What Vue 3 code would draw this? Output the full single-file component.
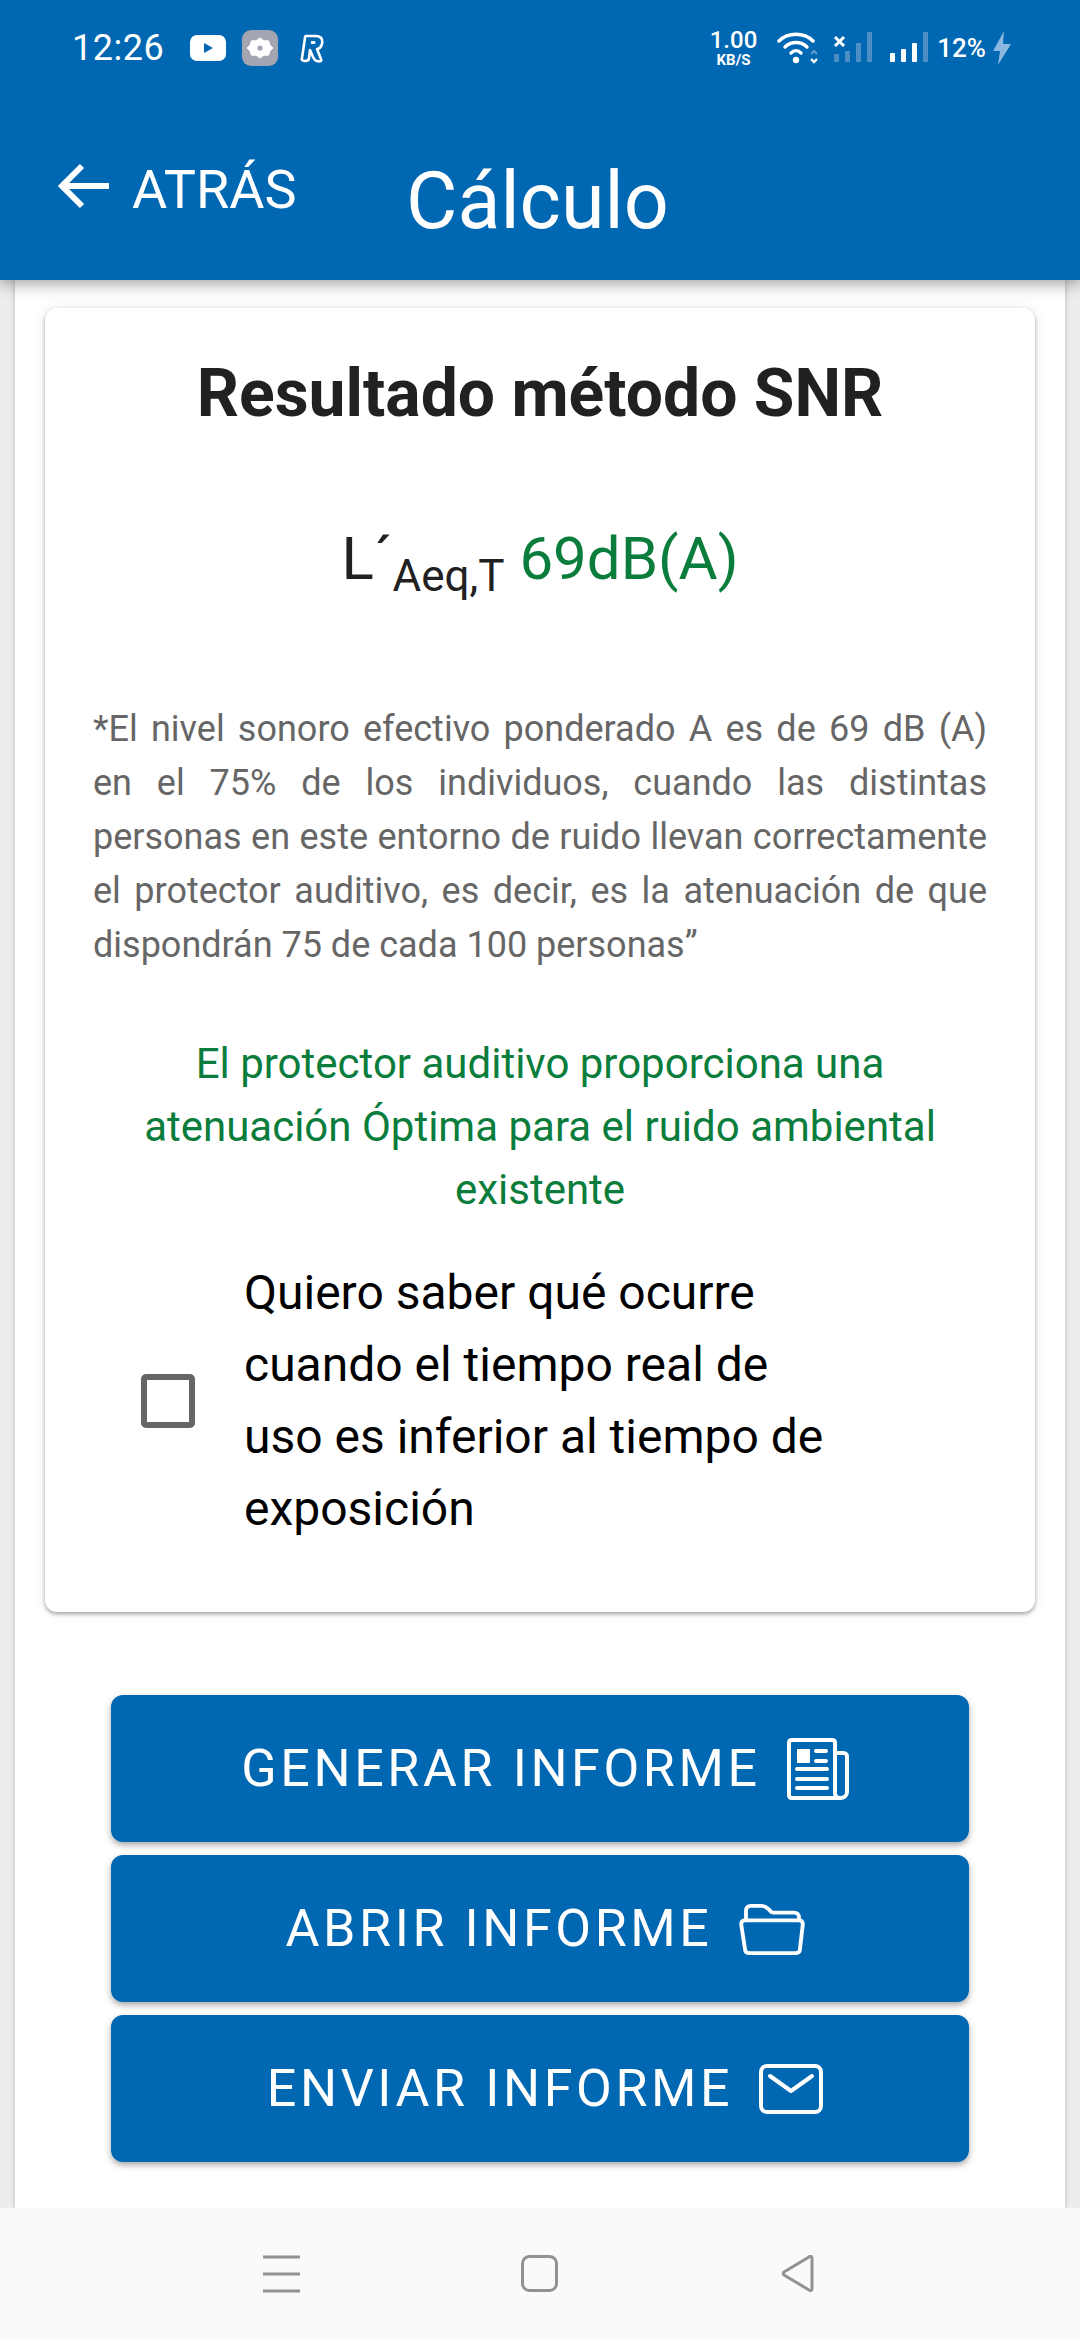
<template>
  <div class="screen">
    <header class="appbar">
      <div class="status">
        <div class="status-left">
          <span class="time">12:26</span>
          <svg class="yt" viewBox="0 0 36 26"><rect width="36" height="26" rx="7" fill="#fff"/><path d="M14 8l9 5-9 5z" fill="#0067b2"/></svg>
          <svg class="gear" viewBox="0 0 36 36"><rect width="36" height="36" rx="9" fill="#a3a5b3"/><path d="M18 8l4 2.800h4.500l1.500 4.400 3 2.800-3 2.800-1.500 4.400H22L18 28l-4-2.800H9.500L8 20.800 5 18l3-2.800 1.500-4.400H14z" fill="#fff" stroke="#fff" stroke-width="1" stroke-linejoin="round"/><circle cx="18" cy="18" r="2.600" fill="#a3a5b3"/></svg>
          <svg class="rev" viewBox="0 0 24 30"><path d="M6 3h10c5 0 7 3 6 8-1 3-3 5-5 5l4 10c1 2-1 3-4 2-2 0-3-2-4-4l-3-7-1 8c0 2-2 3-4 3s-4-1-3-3L5 5c0-1 0-2 1-2z" fill="none" stroke="#fff" stroke-width="2.600" stroke-linejoin="round"/><path d="M11 8h3c2 0 2 3 0 3h-3z" fill="#fff"/></svg>
        </div>
        <div class="status-right">
          <div class="speed"><span>1.00</span><span class="unit">KB/S</span></div>
          <svg class="wifi" viewBox="0 0 42 34"><g fill="none" stroke="#fff" stroke-width="3.400" stroke-linecap="round"><path d="M2 10C11 1 27 1 36 10"/><path d="M8 16c6-6 16-6 22 0"/><path d="M14 22c3-3 7-3 10 0"/></g><circle cx="19" cy="29" r="3.200" fill="#fff"/><path d="M34 23l3-3 3 3" fill="none" stroke="#5f9bcc" stroke-width="2"/><path d="M34 28l3 3 3-3" fill="none" stroke="#fff" stroke-width="2.400"/></svg>
          <svg class="sig" viewBox="0 0 40 32"><path d="M2 5l9 9M11 5l-9 9" stroke="#fff" stroke-width="3"/><g fill="#4b8fc6"><rect x="1" y="22" width="5" height="8"/><rect x="12" y="19" width="5" height="11"/><rect x="23" y="11" width="5" height="19"/><rect x="34" y="0" width="5" height="30"/></g></svg>
          <svg class="sig2" viewBox="0 0 40 32"><g fill="#fff"><rect x="1" y="21" width="5" height="9" rx="1"/><rect x="12" y="17" width="5" height="13" rx="1"/><rect x="23" y="11" width="5" height="19" rx="1"/></g><rect x="34" y="0" width="5" height="30" fill="#4b8fc6"/></svg>
          <span class="batt">12%</span>
          <svg class="bolt" viewBox="0 0 20 34"><path d="M12 0L1 20h7L6 34l13-21h-8z" fill="#8ab8df"/></svg>
        </div>
      </div>
      <div class="toolbar">
        <div class="back">
          <svg viewBox="0 0 56 48"><path d="M53 24H6M26 4L6 24l20 20" fill="none" stroke="#fff" stroke-width="6"/></svg>
          <span>ATRÁS</span>
        </div>
        <h1>Cálculo</h1>
      </div>
    </header>

    <main class="content">
      <div class="sheet">
        <section class="card">
          <h2>Resultado método SNR</h2>
          <p class="level">L´<span class="sub">Aeq,T</span> <span class="green">69dB(A)</span></p>
          <p class="note">*El nivel sonoro efectivo ponderado A es de 69 dB (A) en el 75% de los individuos, cuando las distintas personas en este entorno de ruido llevan correctamente el protector auditivo, es decir, es la atenuación de que dispondrán 75 de cada 100 personas”</p>
          <p class="verdict">El protector auditivo proporciona una atenuación Óptima para el ruido ambiental existente</p>
          <label class="check">
            <span class="box"></span>
            <span class="check-text">Quiero saber qué ocurre cuando el tiempo real de uso es inferior al tiempo de exposición</span>
          </label>
        </section>

        <div class="actions">
          <button v-for="b in buttons" :key="b.label" class="btn">
            <span>{{ b.label }}</span>
            <svg v-if="b.icon === 'news'" class="ico-news" viewBox="0 0 62 62"><g fill="none" stroke="#fff" stroke-width="4" stroke-linejoin="round"><path d="M5 2h40c2 0 3 1 3 3v50c0 3 2 5 5 5H5c-2 0-3-1-3-3V5c0-2 1-3 3-3z"/><path d="M48 15h8c2 0 4 1 4 3v36c0 4-3 6-7 6"/></g><rect x="10" y="11" width="13" height="14" fill="#fff"/><g stroke="#fff" stroke-width="4" stroke-linecap="round"><path d="M29 13h10M29 23h10M10 31h30M10 41h30M10 50h30"/></g></svg>
            <svg v-else-if="b.icon === 'folder'" class="ico-folder" viewBox="0 0 68 54"><g fill="none" stroke="#fff" stroke-width="4" stroke-linejoin="round"><path d="M7 18V8c0-3 2-5 5-5h11c3 0 5 1 7 3l2 2c1 2 2 2 4 2h21c3 0 5 2 5 5v4"/><path d="M6 18h56c3 0 4 2 4 4l-3 26c0 3-2 4-5 4H11c-3 0-5-1-5-4L2 22c0-2 1-4 4-4z"/></g></svg>
            <svg v-else class="ico-mail" viewBox="0 0 64 50"><rect x="2" y="2" width="60" height="46" rx="6" fill="none" stroke="#fff" stroke-width="4"/><path d="M11 12l21 15 21-15" fill="none" stroke="#fff" stroke-width="4" stroke-linecap="round" stroke-linejoin="round"/></svg>
          </button>
        </div>
      </div>
    </main>

    <nav class="navbar">
      <svg viewBox="0 0 38 38"><path d="M0 2h37M0 19h37M0 36h37" stroke="#929292" stroke-width="3"/></svg>
      <svg viewBox="0 0 38 38"><rect x="1.500" y="1.500" width="34" height="34" rx="7" fill="none" stroke="#929292" stroke-width="3"/></svg>
      <svg viewBox="0 0 38 38"><path d="M33 3v31c0 2-2 2-3 1L5 20c-1-1-1-2 0-3L30 2c1-1 3-1 3 1z" fill="none" stroke="#929292" stroke-width="3" stroke-linejoin="round"/></svg>
    </nav>
  </div>
</template>

<script setup>
const buttons = [
  { label: 'GENERAR INFORME', icon: 'news' },
  { label: 'ABRIR INFORME', icon: 'folder' },
  { label: 'ENVIAR INFORME', icon: 'mail' }
]
</script>

<style>
html, body { margin: 0; background: #fff; }
</style>

<style scoped>
.screen {
  width: 1080px;
  height: 2340px;
  display: flex;
  flex-direction: column;
  font-family: Roboto, "Liberation Sans", sans-serif;
  background: #fafafa;
  overflow: hidden;
}

.appbar {
  height: 280px;
  flex: none;
  background: #0067b2;
  color: #fff;
  box-shadow: 0 3px 16px rgba(0, 0, 0, .4);
  position: relative;
  z-index: 1;
}

.status {
  height: 96px;
  padding: 0 68px 0 72px;
  display: flex;
  justify-content: space-between;
  align-items: center;
}
.status-left, .status-right { display: flex; align-items: center; }
.time { font-size: 36px; letter-spacing: .5px; margin-right: 26px; }
.yt { width: 36px; height: 26px; margin-right: 16px; }
.gear { width: 36px; height: 36px; margin-right: 22px; }
.rev { width: 24px; height: 30px; }

.speed { display: flex; flex-direction: column; align-items: center; font-size: 24px; line-height: 24px; font-weight: 500; margin-right: 20px; }
.unit { font-size: 15px; line-height: 16px; font-weight: 700; }
.wifi { width: 42px; height: 34px; margin-right: 14px; }
.sig { width: 40px; height: 32px; margin-right: 16px; }
.sig2 { width: 40px; height: 32px; margin-right: 8px; }
.batt { font-size: 26px; font-weight: 500; margin-right: 6px; }
.bolt { width: 20px; height: 34px; }

.toolbar { display: flex; align-items: flex-start; padding: 45px 0 0 56px; }
.back { display: flex; align-items: center; width: 350px; height: 90px; font-size: 54px; }
.back svg { width: 56px; height: 48px; margin-right: 20px; }
.back span { padding-top: 6px; }
h1 { margin: 5px 0 0; font-size: 79px; font-weight: 400; line-height: 110px; }

.content {
  flex: 1;
  min-height: 0;
  padding: 0 15px;
  background: #ededed;
}
.sheet {
  height: 100%;
  box-sizing: border-box;
  padding: 28px 30px 0;
  background: #fff;
  box-shadow: 0 0 5px rgba(0, 0, 0, .22);
}

.card {
  background: #fff;
  border-radius: 12px;
  height: 1304px;
  box-sizing: border-box;
  padding: 46px 48px 0;
  box-shadow: 0 2px 4px rgba(0, 0, 0, .35), 0 0 18px rgba(0, 0, 0, .06);
}
h2 {
  margin: 0;
  font-size: 66px;
  line-height: 80px;
  font-weight: 700;
  color: #212121;
  text-align: center;
}
.level {
  margin: 85px 0 0;
  font-size: 60px;
  line-height: 80px;
  text-align: center;
  color: #212121;
}
.sub { font-size: 44px; position: relative; top: 12px; }
.green { color: #0a7d3c; }

.note {
  margin: 98px 0 0;
  font-size: 36px;
  line-height: 54px;
  color: #666;
  text-align: justify;
}
.verdict {
  margin: 60px 40px 0;
  font-size: 42px;
  line-height: 63px;
  color: #0a7d3c;
  text-align: center;
}
.check {
  display: flex;
  align-items: center;
  margin-top: 36px;
  padding-left: 48px;
}
.box {
  flex: none;
  width: 54px;
  height: 54px;
  box-sizing: border-box;
  border: 6px solid #666;
  border-radius: 5px;
  margin-right: 49px;
}
.check-text {
  width: 600px;
  font-size: 48px;
  line-height: 72px;
  color: #000;
}

.actions {
  margin-top: 83px;
  padding: 0 66px;
  display: flex;
  flex-direction: column;
  gap: 13px;
}
.btn {
  height: 147px;
  border: 0;
  border-radius: 12px;
  padding: 0 0 0 10px;
  background: #0067b2;
  color: #fff;
  font-family: inherit;
  font-size: 52px;
  letter-spacing: 3.600px;
  display: flex;
  align-items: center;
  justify-content: center;
  gap: 26px;
  box-shadow: 0 3px 6px rgba(0, 0, 0, .35);
}
.ico-news { width: 62px; height: 62px; }
.ico-folder { width: 66px; height: 52px; }
.ico-mail { width: 64px; height: 50px; }

.navbar {
  height: 132px;
  flex: none;
  background: #fafafa;
  display: grid;
  grid-template-columns: repeat(3, 258px);
  justify-content: center;
  align-items: center;
  justify-items: center;
  position: relative;
  z-index: 1;
}
.navbar svg { width: 38px; height: 38px; }
</style>
